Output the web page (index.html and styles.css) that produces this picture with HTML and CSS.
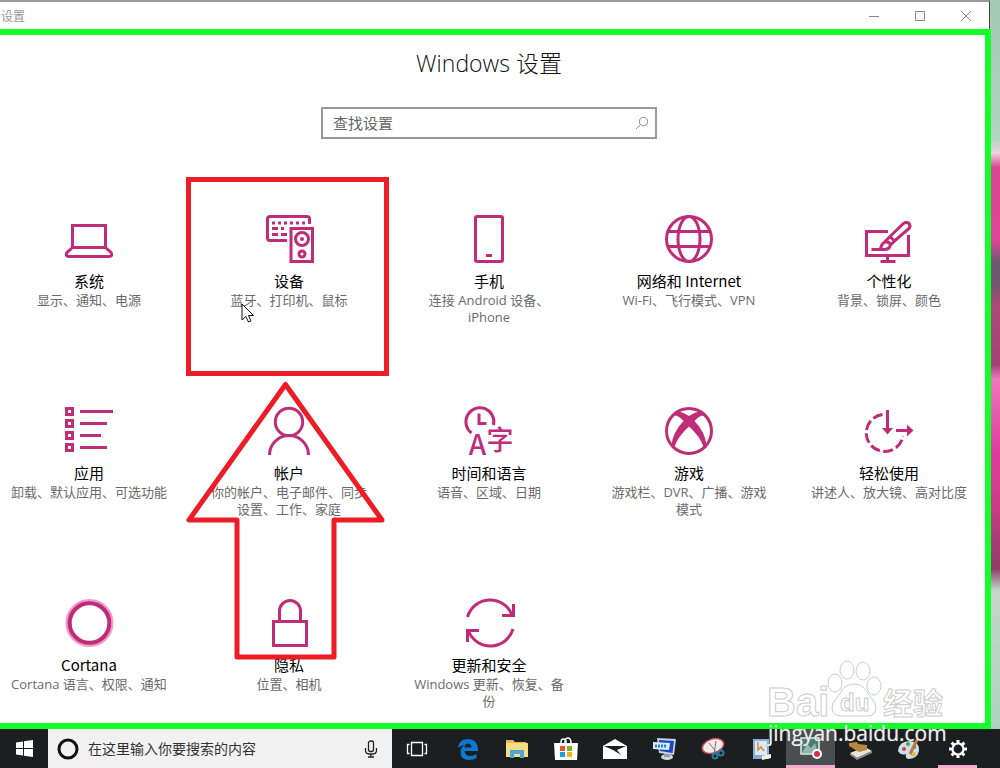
FILE: index.html
```html
<!DOCTYPE html>
<html lang="zh-CN">
<head>
<meta charset="utf-8">
<title>设置</title>
<link rel="stylesheet" href="styles.css">
</head>
<body>
<div class="desktop">
  <div class="window">
    <header class="titlebar">
      <span class="titlebar-text">设置</span>
      <div class="window-controls">
        <button class="window-button" type="button" aria-label="最小化"><svg width="12" height="12" viewBox="0 0 12 12"><path d="M1 6.500H11"/></svg></button>
        <button class="window-button" type="button" aria-label="最大化"><svg width="12" height="12" viewBox="0 0 12 12"><path d="M1.500 1.500H10.500V10.500H1.500Z"/></svg></button>
        <button class="window-button" type="button" aria-label="关闭"><svg width="12" height="12" viewBox="0 0 12 12"><path d="M1 1L11 11M11 1L1 11"/></svg></button>
      </div>
    </header>
    <main class="frame">
      <div class="content">
        <h1 class="heading">Windows 设置</h1>
        <form class="search">
          <input class="search-input" type="text" placeholder="查找设置" aria-label="查找设置">
          <button class="search-button" type="button" aria-label="搜索"><svg width="14" height="14" viewBox="0 0 14 14"><circle cx="8.500" cy="5.500" r="4.200"/><path d="M5.500 8.500L1 13"/></svg></button>
        </form>
        <nav class="tiles">
          <a class="tile" href="#">
            <svg class="tile-icon" viewBox="0 0 48 48"><path d="M7.500 10.500H40.500V32.500H7.500ZM7.500 32.500L2 37.500Q0 41.500 4 41.500H44Q48 41.500 46 37.500L40.500 32.500"/></svg>
            <span class="tile-title">系统</span>
            <span class="tile-text">显示、通知、电源</span>
          </a>
          <a class="tile" href="#">
            <svg class="tile-icon" viewBox="0 0 48 48"><path d="M44.500 9V4Q44.500 1.500 42 1.500H5Q2.500 1.500 2.500 4V23Q2.500 25.500 5 25.500H22"/><path d="M7 8H10M13 8H16M19 8H22M25 8H28M31 8H34M37 8H40M7 13.500H13M16 13.500H19M7 19.500H13M16 19.500H22"/><path d="M26 13.500H47.500V46.500H26Z"/><circle cx="37" cy="24" r="6.500"/><circle cx="37" cy="39" r="3"/><circle class="solid" cx="37" cy="24" r="2"/></svg>
            <span class="tile-title">设备</span>
            <span class="tile-text">蓝牙、打印机、鼠标</span>
            <span class="callout-box"></span>
            <svg class="cursor" width="14" height="20" viewBox="0 0 14 20"><path d="M1 1V17L4.800 13.500L7.500 19L10 18L7.500 12.500H12.500Z"/></svg>
          </a>
          <a class="tile" href="#">
            <svg class="tile-icon" viewBox="0 0 48 48"><rect x="10.500" y="1.500" width="27" height="45" rx="1.500"/><path d="M21 40.500H27"/></svg>
            <span class="tile-title">手机</span>
            <span class="tile-text">连接 Android 设备、iPhone</span>
          </a>
          <a class="tile" href="#">
            <svg class="tile-icon" viewBox="0 0 48 48"><circle cx="24" cy="24" r="22.500"/><ellipse cx="24" cy="24" rx="11" ry="22.500"/><path d="M3.500 16.500H44.500M3.500 31.500H44.500"/></svg>
            <span class="tile-title">网络和 Internet</span>
            <span class="tile-text">Wi-Fi、飞行模式、VPN</span>
          </a>
          <a class="tile" href="#">
            <svg class="tile-icon" viewBox="0 0 48 48"><path d="M23 16.500H1.500V40.500H43.500V20"/><path d="M22.500 41V46M15.500 46.500H30.500"/><path d="M6.500 34.500H20Q25 34 25.500 29.500Q23.500 25.500 19 27.500Q16 29.500 15.500 34.500M19.500 27L25 21.500L29.500 26L25.500 30M25 21.500L38.500 8.500Q41.500 6.500 44 8.500Q46 11 44 13.500L29.500 26"/></svg>
            <span class="tile-title">个性化</span>
            <span class="tile-text">背景、锁屏、颜色</span>
          </a>
          <a class="tile" href="#">
            <svg class="tile-icon" viewBox="0 0 48 48"><path d="M1.500 1.500H7.500V7.500H1.500ZM1.500 13.500H7.500V19.500H1.500ZM1.500 25.500H7.500V31.500H1.500ZM1.500 37.500H7.500V43.500H1.500ZM15 4.500H48M15 16.500H42M15 28.500H36M15 40.500H42"/></svg>
            <span class="tile-title">应用</span>
            <span class="tile-text">卸载、默认应用、可选功能</span>
          </a>
          <a class="tile" href="#">
            <svg class="tile-icon" viewBox="0 0 48 48"><circle cx="24" cy="15" r="13.700"/><path d="M4.500 48A19.500 19.500 0 0 1 43.500 48"/></svg>
            <span class="tile-title">帐户</span>
            <span class="tile-text">你的帐户、电子邮件、同步设置、工作、家庭</span>
            <svg class="callout-arrow" width="200" height="280" viewBox="0 0 200 280"><path d="M99.500 3.500L3 139H51V276H148V139H196Z"/></svg>
          </a>
          <a class="tile" href="#">
            <svg class="tile-icon" viewBox="0 0 48 48"><path d="M6.500 26A14 14 0 1 1 28.500 18"/><path d="M14 6.500V16.500H21.500"/><text class="glyph" x="12.500" y="47.500" font-size="28">A</text><text class="glyph" x="35" y="43" font-size="27">字</text></svg>
            <span class="tile-title">时间和语言</span>
            <span class="tile-text">语音、区域、日期</span>
          </a>
          <a class="tile" href="#">
            <svg class="tile-icon" viewBox="0 0 48 48"><circle cx="24" cy="24" r="22.500"/><path class="solid" d="M10 5Q16 3.500 24 9Q32 3.500 38 5L41 9Q36 7 29.500 14Q40 25 41.500 38L39 41Q35 29 24 19.500Q13 29 9 41L6.500 38Q8 25 18.500 14Q12 7 7 9Z"/></svg>
            <span class="tile-title">游戏</span>
            <span class="tile-text">游戏栏、DVR、广播、游戏模式</span>
          </a>
          <a class="tile" href="#">
            <svg class="tile-icon" viewBox="0 0 48 48"><path stroke-dasharray="10 3.500" d="M17.500 7.600A18.500 18.500 0 1 0 38 29"/><path d="M22.500 3V22M31 23.500H43"/><path class="solid" d="M17 21H28L22.500 27.500ZM42 17.500L48.500 23.500L42 29.500Z"/></svg>
            <span class="tile-title">轻松使用</span>
            <span class="tile-text">讲述人、放大镜、高对比度</span>
          </a>
          <a class="tile" href="#">
            <svg class="tile-icon" viewBox="0 0 48 48"><circle class="halo" cx="24.500" cy="24" r="22.500"/><circle class="ring" cx="24.500" cy="24" r="19.800"/></svg>
            <span class="tile-title">Cortana</span>
            <span class="tile-text">Cortana 语言、权限、通知</span>
          </a>
          <a class="tile" href="#">
            <svg class="tile-icon" viewBox="0 0 48 48"><path d="M8.500 22.500H41.500V46.500H8.500ZM14.500 22V12A10.500 10.500 0 0 1 35.500 12V22"/></svg>
            <span class="tile-title">隐私</span>
            <span class="tile-text">位置、相机</span>
          </a>
          <a class="tile" href="#">
            <svg class="tile-icon" viewBox="0 0 48 48"><path d="M2.500 18A23.500 23.500 0 0 1 47 16M48.500 5V16.500H37M48 30A23.500 23.500 0 0 1 3.500 32M2.500 43V31.500H14"/></svg>
            <span class="tile-title">更新和安全</span>
            <span class="tile-text">Windows 更新、恢复、备份</span>
          </a>
        </nav>
      </div>
    </main>
  </div>
  <div class="wallpaper"></div>
</div>

<footer class="taskbar">
  <button class="start" type="button" aria-label="开始"><svg width="17" height="17" viewBox="0 0 17 17"><path fill="#fff" d="M0 2.500L7 1.500V8H0ZM8 1.300L17 0V8H8ZM0 9H7V15.500L0 14.500ZM8 9H17V17L8 15.700Z"/></svg></button>
  <div class="taskbar-search">
    <svg width="22" height="22" viewBox="0 0 22 22"><circle cx="11" cy="11" r="9" fill="none" stroke="#111" stroke-width="3"/></svg>
    <input class="taskbar-input" type="text" placeholder="在这里输入你要搜索的内容" aria-label="在这里输入你要搜索的内容">
    <button class="mic" type="button" aria-label="语音"><svg width="14" height="18" viewBox="0 0 14 18" fill="none" stroke="#222" stroke-width="1.300"><rect x="4.500" y="1" width="5" height="10.500" rx="2"/><path d="M1.500 8V11Q2 14 5 14H9Q12 14 12.500 11V8M7 14V17M4 17H10"/></svg></button>
  </div>
  <button class="task task-view" type="button" aria-label="任务视图"><svg width="22" height="16" viewBox="0 0 22 16" fill="none" stroke="#fff" stroke-width="1.300"><path d="M5.500 1.500H16.500V14.500H5.500ZM3.500 3.500H1.500V12.500H3.500M18.500 3.500H20.500V12.500H18.500"/></svg></button>
  <button class="task" type="button" aria-label="Edge"><svg width="22" height="22" viewBox="0 0 22 22"><path fill="#0b78d4" d="M1 10Q2 1 11 1Q20 1 21 11V13H7.500Q8 18 13 18Q17 18 19.500 16V20Q16.500 22 12 22Q3.500 22 3.500 14Q3.500 9 8 7Q4 7 1 10ZM7.500 9.500H14.500Q14.500 5.500 11 5.500Q8 5.500 7.500 9.500Z"/></svg></button>
  <button class="task" type="button" aria-label="文件资源管理器"><svg width="22" height="20" viewBox="0 0 22 20"><path fill="#e9b64d" d="M0 1H7L9 3H20V6H0Z"/><path fill="#fbdc85" d="M0 4H22V18H0Z"/><path fill="#4aa7d8" d="M4 19V11H18V19H14V15H8V19Z"/></svg></button>
  <button class="task" type="button" aria-label="应用商店"><svg width="24" height="24" viewBox="0 0 24 24"><path fill="none" stroke="#fff" stroke-width="1.500" d="M7 7V5Q7 2 9.500 2T12 5V7M11 7V4Q11.500 1 14 1T17 5V7"/><path fill="#fff" d="M0 6H24L23 23H1Z"/><path fill="#e5532d" d="M6 9H11V14H6Z"/><path fill="#77b82a" d="M13 9H18V14H13Z"/><path fill="#229bd8" d="M6 15H11V20H6Z"/><path fill="#f0b323" d="M13 15H18V20H13Z"/></svg></button>
  <button class="task" type="button" aria-label="邮件"><svg width="24" height="20" viewBox="0 0 24 20"><path fill="#fff" d="M0 7L12 0L24 7V20H0Z"/><path fill="#1c1f1f" d="M1 7H23L14 11L18 16L10 11Z"/></svg></button>
  <button class="task" type="button" aria-label="远程桌面"><svg width="24" height="24" viewBox="0 0 24 24"><ellipse cx="15" cy="20" rx="6" ry="3" fill="#d5d9dc"/><path fill="#8f9ba5" d="M12 15H18V20H12Z"/><path fill="#c5d4e5" d="M5 1L24 2L22 18L7 16Z"/><path fill="#1d4aba" d="M7 3L22 4L20.500 16L8 14Z"/><path fill="#dceaf7" d="M1 5L18 6L17 13L1 12Z"/><path stroke="#1689d8" stroke-width="3" stroke-dasharray="2 1" d="M3 9H15"/></svg></button>
  <button class="task" type="button" aria-label="截图工具"><svg width="24" height="24" viewBox="0 0 24 24"><ellipse cx="12" cy="9" rx="11" ry="7" transform="rotate(-18 12 9)" fill="#f3e9ea" stroke="#c94957" stroke-width="1.500"/><path stroke="#777" d="M8 6L17 17M15 4L13 17"/><g fill="none" stroke="#237c9e" stroke-width="2"><circle cx="14" cy="19" r="2.500"/><circle cx="20" cy="16" r="2.500"/></g></svg></button>
  <button class="task" type="button" aria-label="图片文档"><svg width="20" height="22" viewBox="0 0 20 22"><path fill="#86add8" d="M1 1H17V21H1Z"/><path fill="#dceaf3" d="M3 3H15V17H3Z"/><path fill="none" stroke="#d28a3a" stroke-width="1.500" d="M6 4V12L9 9L12 13"/><path fill="#f4f1e8" d="M10 18L19 16V20L10 22Z"/></svg></button>
  <button class="task task-active" type="button" aria-label="录屏工具"><svg width="24" height="24" viewBox="0 0 24 24"><path fill="#467f76" stroke="#e7efec" stroke-width="1.500" d="M2 3H20V19H2Z"/><path fill="#91b8ad" d="M3 18L8 9L12 13L16 8L19 18Z"/><circle cx="18" cy="19" r="4" fill="#d62e44" stroke="#fff" stroke-width="2"/></svg></button>
  <button class="task" type="button" aria-label="扫描工具"><svg width="24" height="22" viewBox="0 0 24 22"><path fill="#e8e5d8" d="M2 15L17 9L24 13L9 20Z"/><path fill="#8d8d87" d="M2 15L9 20V22L2 17ZM9 20L24 13V15L9 22Z"/><path fill="#b98742" d="M1 5L9 4L10 6L19 7V12L11 14L1 8Z"/></svg></button>
  <button class="task" type="button" aria-label="画图"><svg width="24" height="24" viewBox="0 0 24 24"><path fill="#c9e0ef" d="M1 14Q2 4 13 4Q23 5 22 14Q20 22 11 22Q8 21 9 17Q4 19 1 14Z"/><circle cx="7" cy="12" r="2" fill="#d83f38"/><circle cx="11" cy="7" r="2" fill="#56a43b"/><circle cx="17" cy="10" r="2" fill="#356ec4"/><circle cx="16" cy="17" r="2.500" fill="#e4bd37"/><path stroke="#c57a2d" stroke-width="3" d="M21 1L13 17"/></svg></button>
  <button class="task task-open" type="button" aria-label="设置"><svg width="20" height="20" viewBox="0 0 20 20"><circle cx="10" cy="10" r="5.500" fill="none" stroke="#fff" stroke-width="2.200"/><path stroke="#fff" stroke-width="3" d="M10 1V4M10 16V19M1 10H4M16 10H19M3.600 3.600L5.800 5.800M14.200 14.200L16.400 16.400M16.400 3.600L14.200 5.800M5.800 14.200L3.600 16.400"/></svg></button>
</footer>

<div class="watermark">
  <svg class="watermark-logo" width="180" height="66" viewBox="0 0 180 66"><g class="outline"><ellipse cx="67" cy="28" rx="7" ry="9"/><ellipse cx="79" cy="15" rx="7" ry="9"/><ellipse cx="95" cy="16" rx="7" ry="9"/><ellipse cx="106" cy="31" rx="7" ry="9"/><path d="M86 29Q95 29 99 37Q103 43 107 48Q111 61 98 61H74Q61 61 65 48Q69 43 73 37Q77 29 86 29Z"/><text x="-1" y="61" font-size="40">Bai</text><text class="watermark-cn" x="115" y="59" font-size="30">经验</text><text x="72" y="56" font-size="24">du</text></g></svg>
  <span class="watermark-url">jingyan.baidu.com</span>
</div>
</body>
</html>
```
FILE: styles.css
```css
* {
  box-sizing: border-box;
}

body {
  position: relative;
  display: flex;
  flex-direction: column;
  min-height: 100vh;
  margin: 0;
  overflow-x: hidden;
  background: #fff;
  font-family: "Noto Sans CJK SC", "Noto Sans", sans-serif;
  color: #111;
}

button {
  display: flex;
  align-items: center;
  justify-content: center;
  padding: 0;
  border: 0;
  background: none;
}

.desktop {
  display: flex;
  flex: 1;
}

.window {
  display: flex;
  flex: 1;
  flex-direction: column;
  min-width: 0;
  background: #aacdbb;
}

.wallpaper {
  width: 9px;
  background: linear-gradient(#a4c6b5 0, #b0d5c3 19%, #f3cfdf 21%, #d94390 23%, #e0459b 33%, #6b5872 36%, #75566f 39%, #b04878 42%, #a83f78 50%, #ef75bd 52%, #e23b9e 62%, #c93a86 70%, #8f3c68 78%, #c5d5cc 81%, #aed2c1 100%);
}

.titlebar {
  display: flex;
  align-items: center;
  justify-content: space-between;
  height: 29px;
  margin-right: 1px;
  padding-left: 1px;
  border-top: 2px solid #999;
  border-right: 1px solid #444;
  background: #fff;
}

.titlebar-text {
  font-size: 12px;
  line-height: 16px;
  color: #999;
}

.window-controls {
  display: flex;
}

.window-button {
  width: 46px;
  height: 26px;
}

.window-button svg {
  fill: none;
  stroke: #888;
}

.frame {
  flex: 1;
  overflow: hidden;
  border: solid #12ff2a;
  border-width: 6px 6px 6px 0;
  background: #fff;
}

.content {
  margin: 0 -4px 0 -11px;
  padding-top: 12px;
}

.heading {
  margin: 0;
  font-family: "Open Sans", "Noto Sans CJK SC", sans-serif;
  font-size: 23px;
  font-weight: 300;
  line-height: 32px;
  text-align: center;
}

.search {
  display: flex;
  width: 336px;
  height: 32px;
  margin: 28px auto 44px;
  border: 2px solid #999;
}

.search-input {
  flex: 1;
  min-width: 0;
  padding: 0 0 2px 10px;
  border: 0;
  outline: 0;
  background: none;
  font: 15px "Noto Sans CJK SC", sans-serif;
}

.search-input::placeholder {
  color: #666;
  opacity: 1;
}

.search-button {
  width: 26px;
}

.search-button svg {
  fill: none;
  stroke: #888;
}

.tiles {
  display: grid;
  grid-template-columns: repeat(5, minmax(0, 1fr));
  grid-template-rows: 192px 192px auto;
}

.tile {
  position: relative;
  display: flex;
  flex-direction: column;
  align-items: center;
  padding: 32px 21px 0;
  text-align: center;
  text-decoration: none;
  color: #111;
}

.tile-icon {
  width: 48px;
  height: 48px;
  overflow: visible;
  fill: none;
  stroke: #bf2c77;
  stroke-width: 3;
}

.tile-icon .solid {
  fill: #bf2c77;
  stroke: none;
}

.tile-icon .halo {
  stroke: #f19aca;
}

.tile-icon .ring {
  stroke-width: 4;
}

.tile-icon .glyph {
  fill: #bf2c77;
  stroke: none;
  font-weight: 500;
  text-anchor: middle;
}

.tile-title {
  margin-top: 8px;
  font-size: 15px;
  line-height: 20px;
  color: #000;
}

.tile-text {
  margin-top: 1px;
  font-family: "Open Sans", "Noto Sans CJK SC", sans-serif;
  font-size: 13px;
  line-height: 17px;
  color: #6a6a6a;
}

.callout-box {
  position: absolute;
  inset: -6px 0 -1px -3px;
  border: 5px solid #ee1c25;
}

.cursor {
  position: absolute;
  top: 120px;
  left: 52px;
  fill: #fff;
  stroke: #111;
}

.callout-arrow {
  position: absolute;
  z-index: 1;
  top: 6px;
  left: -3px;
  fill: none;
  stroke: #ee1c25;
  stroke-width: 5;
  stroke-linejoin: round;
}

.taskbar {
  display: flex;
  height: 39px;
  background: #1c1f1f;
}

.start {
  width: 48px;
}

.taskbar-search {
  display: flex;
  flex: 0 1 344px;
  align-items: center;
  min-width: 0;
  padding: 0 12px 0 9px;
  background: #f1f1f1;
}

.taskbar-input {
  flex: 1;
  min-width: 0;
  padding: 0 0 2px 9px;
  border: 0;
  outline: 0;
  background: none;
  font: 14px "Noto Sans CJK SC", sans-serif;
}

.taskbar-input::placeholder {
  color: #333;
  opacity: 1;
}

.mic {
  width: 18px;
}

.task {
  width: 49px;
}

.task-view {
  margin-right: 2px;
}

.task-active {
  border-bottom: 3px solid #f4a9cf;
  background: #4b4e4e;
}

.task-open {
  position: relative;
}

.task-open::after {
  position: absolute;
  right: 5px;
  bottom: 0;
  left: 5px;
  height: 3px;
  background: #f4a9cf;
  content: "";
}

.watermark {
  position: absolute;
  right: 52px;
  bottom: 23px;
  display: flex;
  flex-direction: column;
  width: 180px;
  pointer-events: none;
}

.watermark-logo {
  overflow: visible;
}

.outline {
  fill: #fff;
  stroke: #ccc;
  stroke-width: 1;
  font-family: "Liberation Sans", sans-serif;
  font-weight: 700;
}

.watermark-cn {
  font-family: "Noto Sans CJK SC", sans-serif;
}

.watermark-url {
  font: 21px/24px "Open Sans", sans-serif;
  color: #eee;
  text-shadow: 0 0 1px #999;
}
```
